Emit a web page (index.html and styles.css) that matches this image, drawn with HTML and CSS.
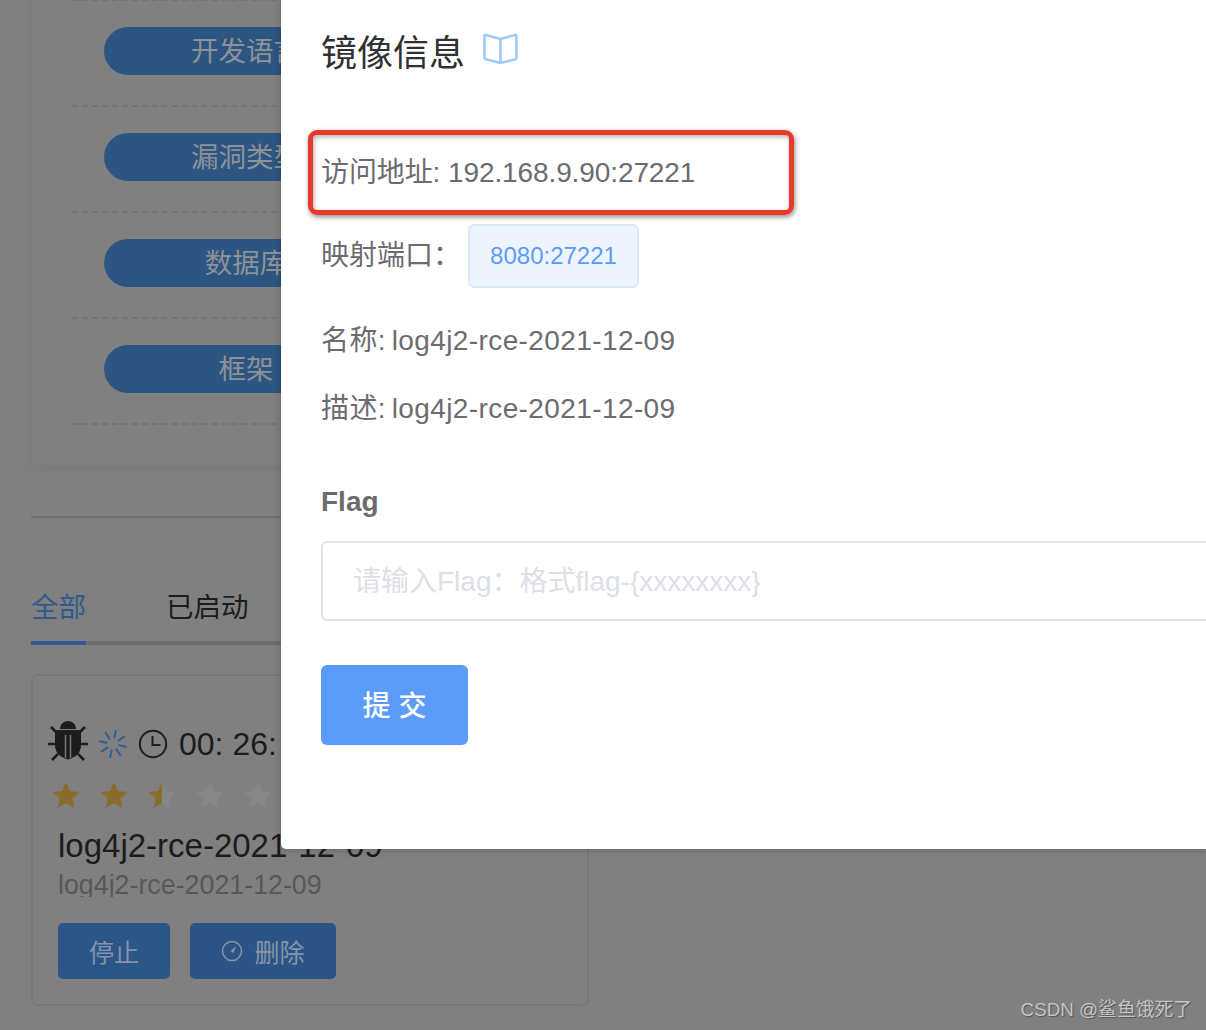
FILE: index.html
```html
<!DOCTYPE html>
<html lang="en">
<head>
  <meta charset="UTF-8">
  <meta name="viewport" content="width=device-width, initial-scale=1.0">
  <title>镜像信息</title>
  <link rel="stylesheet" href="styles.css">
</head>
<body>
  <svg class="defs" width="0" height="0">
    <defs>
      <symbol id="star" viewBox="0 0 28 28">
        <polygon points="14,1 18,10 27.5,11 20.5,17.5 22.5,27 14,22 5.5,27 7.5,17.5 0.5,11 10,10"></polygon>
      </symbol>
      <linearGradient id="halfStar">
        <stop offset="50%" stop-color="#8a6d2a"></stop>
        <stop offset="50%" stop-color="#85878b"></stop>
      </linearGradient>
    </defs>
  </svg>

  <!-- Page behind the dialog -->
  <div class="page">
    <div class="filter-card">
      <div class="filter-list">
        <div class="filter-row"><div class="pill">开发语言</div></div>
        <div class="filter-row"><div class="pill">漏洞类型</div></div>
        <div class="filter-row"><div class="pill">数据库</div></div>
        <div class="filter-row"><div class="pill">框架</div></div>
      </div>
    </div>

    <div class="divider"></div>

    <div class="tabs">
      <div class="tab active">全部</div>
      <div class="tab">已启动</div>
    </div>

    <div class="image-card">
      <div class="status-row">
        <svg class="bug-icon" viewBox="0 0 40 40" width="40" height="40">
          <path d="M12 8a8 8 0 0 1 16 0z" fill="#1c1c1c"></path>
          <path d="M9 9h22q2 0 2 2v13q0 11-13 14.500Q7 35 7 24V11q0-2 2-2z" fill="#1c1c1c"></path>
          <path d="M17.500 14v23M22.500 14v23" stroke="#777" stroke-width="1.500"></path>
          <path d="M3 6l6 6M37 6l-6 6M0 23h7M40 23h-7M4 39l6-6M36 39l-6-6" stroke="#1c1c1c" stroke-width="2.600" fill="none"></path>
        </svg>
        <svg class="spin-icon" viewBox="0 0 28 28" width="28" height="28">
          <g transform="rotate(12 14 14)">
            <path d="M14 0.500v7M14 20.500v7M0.500 14h7M20.500 14h7M4.500 4.500l5 5M18.500 18.500l5 5M23.500 4.500l-5 5M9.500 18.500l-5 5" stroke="#33618f" stroke-width="2" stroke-linecap="round" fill="none"></path>
          </g>
        </svg>
        <svg class="clock-icon" viewBox="0 0 30 30" width="30" height="30">
          <circle cx="15" cy="15" r="13.200" stroke="#1c1c1c" stroke-width="2" fill="none"></circle>
          <path d="M14.500 7v9h8" stroke="#1c1c1c" stroke-width="2" fill="none"></path>
        </svg>
        <span class="timer">00: 26: 41</span>
      </div>
      <div class="stars">
        <svg class="star on" width="28" height="28"><use href="#star"></use></svg>
        <svg class="star on" width="28" height="28"><use href="#star"></use></svg>
        <svg class="star half" width="28" height="28"><use href="#star"></use></svg>
        <svg class="star" width="28" height="28"><use href="#star"></use></svg>
        <svg class="star" width="28" height="28"><use href="#star"></use></svg>
      </div>
      <div class="image-name">log4j2-rce-2021-12-09</div>
      <div class="image-desc">log4j2-rce-2021-12-09</div>
      <div class="card-actions">
        <button class="btn-stop">停止</button>
        <button class="btn-delete">
          <svg viewBox="0 0 22 22" width="22" height="22">
            <circle cx="11" cy="11" r="9.500" stroke="#8494aa" stroke-width="1.600" fill="none"></circle>
            <path d="M15 6l-2.500 7-3-2z" fill="#8494aa"></path>
          </svg>
          删除
        </button>
      </div>
    </div>
  </div>

  <!-- Dialog -->
  <div class="dialog">
    <div class="dialog-title">
      <span>镜像信息</span>
      <svg viewBox="0 0 35 32" width="35" height="32">
        <path d="M17.500 6L3 2Q1.500 1.500 1.500 3v22q0 1 1 1.300L17.500 30l15-3.700q1-.3 1-1.300V3q0-1.500-1.500-1zV30" stroke="#a3c9f5" stroke-width="2.600" fill="none" stroke-linejoin="round"></path>
      </svg>
    </div>

    <div class="info-row address">
      访问地址: 192.168.9.90:27221
      <div class="highlight"></div>
    </div>
    <div class="port-row">
      <span class="port-label">映射端口：</span>
      <span class="tag">8080:27221</span>
    </div>
    <div class="info-row name-row">名称: log4j2-rce-2021-12-09</div>
    <div class="info-row desc-row">描述: log4j2-rce-2021-12-09</div>

    <div class="flag-label">Flag</div>
    <input class="flag-input" type="text" placeholder="请输入Flag：格式flag-{xxxxxxxx}">
    <button class="submit">提 交</button>
  </div>

  <div class="watermark">CSDN @鲨鱼饿死了</div>
</body>
</html>
```

FILE: styles.css
```css
/* General */
* {
  box-sizing: border-box;
}

html,
body {
  margin: 0;
  height: 1030px;
  overflow: hidden;
}

body {
  position: relative;
  background: #808080;
  font-family: "Liberation Sans", "Noto Sans CJK SC", sans-serif;
  color: #1c1c1c;
}

.defs {
  position: absolute;
}

.page {
  padding-left: 31px;
  width: 1175px;
}

/* Filter card */
.filter-card {
  margin-top: -30px;
  padding: 30px 40px 40px 40px;
  height: 496px;
  border: 1px solid #7a7a7a;
  border-radius: 6px;
  box-shadow: 0 2px 12px rgba(0, 0, 0, 0.06);
}

.filter-list {
  border-top: 2px dashed #747474;
  margin-top: -2px;
}

.filter-row {
  height: 106px;
  padding: 26px 0 0 32px;
  border-bottom: 2px dashed #747474;
}

.pill {
  width: 284px;
  height: 48px;
  line-height: 50px;
  border-radius: 24px;
  background: #2c5581;
  color: #8c9298;
  font-size: 27.5px;
  text-align: center;
}

.divider {
  margin-top: 50px;
  height: 2px;
  background: #707070;
}

/* Tabs */
.tabs {
  display: flex;
  gap: 80px;
  margin-top: 70px;
  border-bottom: 4px solid #6e6e70;
}

.tab {
  height: 57px;
  line-height: 40px;
  font-size: 27.5px;
  margin-bottom: -4px;
}

.tab.active {
  color: #305a90;
  border-bottom: 4px solid #2e5a94;
}

/* Image card */
.image-card {
  margin-top: 29px;
  width: 558px;
  height: 332px;
  padding: 45px 0 0 25px;
  border: 2px solid #787878;
  border-radius: 6px;
}

.status-row {
  display: flex;
  align-items: center;
  height: 46px;
  margin-left: -10px;
}

.bug-icon {
  align-self: flex-start;
  margin-right: 11px;
}

.spin-icon {
  margin-right: 11px;
}

.clock-icon {
  margin-right: 11px;
}

.timer {
  font-size: 32px;
  white-space: nowrap;
}

.stars {
  display: flex;
  gap: 20px;
  margin: 14px 0 0 -6px;
}

.star {
  fill: #85878b;
}

.star.on {
  fill: #8a6d2a;
}

.star.half {
  fill: url(#halfStar);
}

.image-name {
  margin-top: 17px;
  font-size: 33px;
  line-height: 40px;
  white-space: nowrap;
}

.image-desc {
  margin-top: 7px;
  height: 24px;
  overflow: hidden;
  font-size: 26.800px;
  line-height: 24px;
  color: #585858;
}

.card-actions {
  display: flex;
  gap: 20px;
  margin-top: 26px;
}

.card-actions button {
  height: 56px;
  border: none;
  border-radius: 5px;
  font-family: inherit;
  font-size: 25px;
  color: #8494aa;
}

.btn-stop {
  width: 112px;
  background: #2d5688;
}

.btn-delete {
  display: flex;
  align-items: center;
  justify-content: center;
  gap: 11px;
  width: 146px;
  background: #2c5486;
}

/* Dialog */
.dialog {
  position: absolute;
  top: 0;
  left: 281px;
  width: 925px;
  height: 849px;
  padding: 27px 0 0 40px;
  background: #fff;
  border-radius: 0 0 0 5px;
  box-shadow: 0 1px 8px rgba(0, 0, 0, 0.2);
  overflow: hidden;
  color: #6b6c6f;
  font-size: 28px;
}

.dialog-title {
  display: flex;
  align-items: flex-start;
  gap: 18px;
  height: 50px;
  line-height: 54px;
  font-size: 36px;
  color: #303133;
}

.dialog-title svg {
  margin-top: 6px;
}

.info-row {
  height: 40px;
  line-height: 42px;
}

.address {
  position: relative;
  margin-top: 75px;
  letter-spacing: -0.1px;
}

.highlight {
  position: absolute;
  top: -22px;
  left: -13px;
  width: 486px;
  height: 85px;
  border: 5px solid #e8392b;
  border-radius: 9px;
  box-shadow: 1px 2px 5px rgba(0, 0, 0, 0.45), inset 1px 2px 5px rgba(0, 0, 0, 0.3);
}

.port-row {
  display: flex;
  align-items: center;
  margin-top: 32px;
}

.port-label {
  width: 147px;
  margin-bottom: 6px;
}

.tag {
  width: 171px;
  height: 64px;
  line-height: 60px;
  text-align: center;
  border: 2px solid #d9e8fb;
  border-radius: 6px;
  background: #edf4fe;
  color: #5a9cf8;
  font-size: 24px;
}

.name-row {
  margin-top: 32px;
  letter-spacing: 0.4px;
  word-spacing: -2.500px;
}

.desc-row {
  margin-top: 28px;
  letter-spacing: 0.4px;
  word-spacing: -2.500px;
}

.flag-label {
  margin-top: 53px;
  height: 40px;
  line-height: 42px;
  font-weight: bold;
}

.flag-input {
  display: block;
  margin-top: 20px;
  width: 1000px;
  height: 80px;
  padding: 2px 30px 0;
  border: 2px solid #dfe1e6;
  border-radius: 6px;
  font-family: inherit;
  font-size: 28px;
}

.flag-input::placeholder {
  color: #dcdfe6;
}

.submit {
  display: block;
  margin-top: 44px;
  padding-bottom: 4px;
  width: 147px;
  height: 80px;
  border: none;
  border-radius: 6px;
  background: #5a9cf8;
  color: #fff;
  font-family: inherit;
  font-size: 28px;
  font-weight: 500;
}

/* Watermark on the screenshot */
.watermark {
  position: absolute;
  right: 14px;
  bottom: 8px;
  font-size: 18.800px;
  line-height: 24px;
  color: #c4c4c4;
  text-shadow: 1px 1px 1px #555;
  white-space: nowrap;
}
```
